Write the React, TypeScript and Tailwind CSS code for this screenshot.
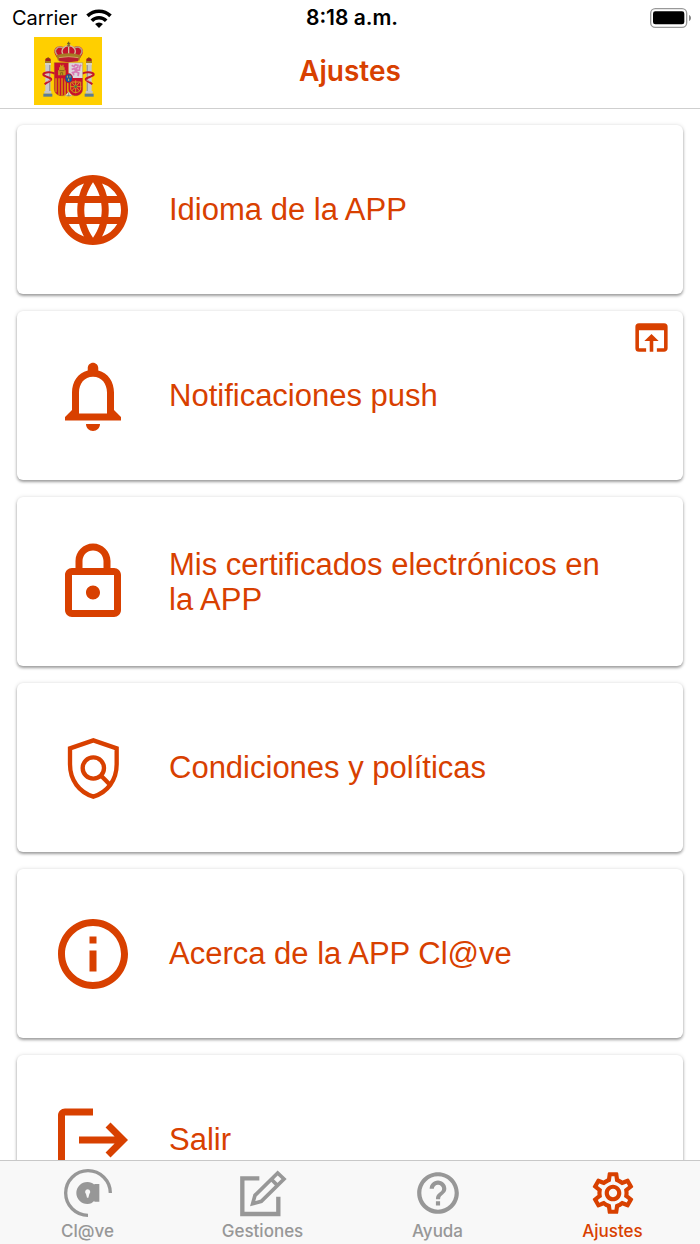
import type { ReactNode } from 'react'
import {
  MdHelpOutline,
  MdLanguage,
  MdLogout,
  MdNotificationsNone,
  MdOpenInBrowser,
  MdOutlineInfo,
  MdOutlineLock,
  MdOutlineSettings,
} from 'react-icons/md'

interface Setting {
  label: string
  icon: ReactNode
  external?: boolean
}

interface Tab {
  label: string
  href: string
  icon: ReactNode
  active?: boolean
}

const SETTINGS: Setting[] = [
  { label: 'Idioma de la APP', icon: <MdLanguage className="size-[84px]" /> },
  { label: 'Notificaciones push', icon: <MdNotificationsNone className="size-[84px]" />, external: true },
  { label: 'Mis certificados electrónicos en la APP', icon: <MdOutlineLock className="size-[84px]" /> },
  { label: 'Condiciones y políticas', icon: <PolicyIcon /> },
  { label: 'Acerca de la APP Cl@ve', icon: <MdOutlineInfo className="size-[84px]" /> },
  { label: 'Salir', icon: <MdLogout className="size-[84px]" /> },
]

const TABS: Tab[] = [
  { label: 'Cl@ve', href: '#clave', icon: <ClaveIcon /> },
  { label: 'Gestiones', href: '#gestiones', icon: <EditIcon /> },
  { label: 'Ayuda', href: '#ayuda', icon: <MdHelpOutline className="size-[50px]" /> },
  { label: 'Ajustes', href: '#ajustes', icon: <MdOutlineSettings className="size-[50px]" />, active: true },
]

function PolicyIcon() {
  return (
    <svg viewBox="0 0 252 252" className="size-[84px]" fill="none" stroke="currentColor" strokeWidth="13" aria-hidden="true">
      <path d="M127 43L57 67v48c0 48 28 84 70 97 42-13 70-49 70-97V67z" />
      <circle cx="127" cy="126" r="32" />
      <path d="M149 148l28 28" />
    </svg>
  )
}

function ClaveIcon() {
  return (
    <svg viewBox="0 0 150 150" className="size-[50px]" aria-hidden="true">
      <path d="M75 142A67 67 0 1 1 142 75" fill="none" stroke="currentColor" strokeWidth="10" />
      <path d="M73 42c9 0 16 3 21 8v-2h15v53H94v-3c-5 6-12 10-21 10a33 33 0 1 1 0-66z" fill="currentColor" />
      <path d="M74 64a8 8 0 0 0-5 14l3 11h4l3-11a8 8 0 0 0-5-14z" fill="#f7f7f7" />
    </svg>
  )
}

function EditIcon() {
  return (
    <svg viewBox="0 0 150 150" className="size-[50px]" fill="none" stroke="currentColor" aria-hidden="true">
      <path d="M64 31H13v107h108V86" strokeWidth="13" />
      <path d="M44 107l7-25 68-67 19 18-68 67z" strokeWidth="11" />
      <path d="M99 33l20 20" strokeWidth="11" />
    </svg>
  )
}

function WifiIcon() {
  return (
    <svg viewBox="0 0 78 58" className="h-[19px] w-[26px]" fill="none" stroke="currentColor" strokeWidth="11" aria-label="Wi-Fi">
      <path d="M4 21a50 50 0 0 1 70 0" />
      <path d="M17 36a31 31 0 0 1 44 0" />
      <path d="M39 58L27 46a17 17 0 0 1 24 0z" fill="currentColor" stroke="none" />
    </svg>
  )
}

function BatteryIcon() {
  return (
    <svg viewBox="0 0 126 60" className="h-5 w-[42px]" aria-label="Batería">
      <rect x="2" y="2" width="108" height="56" rx="14" fill="none" stroke="#999" strokeWidth="4" />
      <rect x="9" y="10" width="94" height="39" rx="7" />
      <path d="M117 21c8 3 8 15 0 18z" fill="#888" />
    </svg>
  )
}

function Pillar() {
  return (
    <g>
      <path d="M33 78h18v6H33z" fill="#d8d3c0" />
      <path d="M34 84h15v80H34z" fill="#c9c9cc" />
      <path d="M45 84h4v80h-4z" fill="#9a9a9e" />
      <path d="M31 162h21v8H31z" fill="#c4c4c4" />
      <path d="M28 170h27v9H28z" fill="#5c7d93" />
      <path d="M33 71h18v7H33z" fill="#a77a1c" />
      <path d="M34 66q8-7 16 0v6H34z" fill="#a3211f" />
      <path d="M41 61h3v6h-3z" fill="#7a5a10" />
      <path d="M62 110c-10-7-30-5-34 1-3 8 23 9 24 16 0 5-12 6-20 15" fill="none" stroke="#c3152c" strokeWidth="6" />
      <path d="M33 112l12 4M38 134l12-5" stroke="#e9b7a0" strokeWidth="2" />
    </g>
  )
}

function CoatOfArms() {
  return (
    <svg viewBox="0 0 204 204" className="size-[68px]" role="img" aria-label="Gobierno de España">
      <path d="M0 0h204v204H0z" fill="#ffcf00" />
      <Pillar />
      <g transform="matrix(-1 0 0 1 207 0)">
        <Pillar />
      </g>
      {/* crown */}
      <path d="M63 52c-8-22 12-29 25-22 8-5 24-5 32 0 13-7 33 0 25 22l-6 10H69z" fill="#c4152c" />
      <path d="M70 55c-15-19 3-29 17-22M138 55c15-19-3-29-17-22M88 54c-10-15 1-27 16-28 15 1 26 13 16 28M104 25v29" fill="none" stroke="#d3c09a" strokeWidth="4" />
      <path d="M70 55c-15-19 3-29 17-22M138 55c15-19-3-29-17-22" fill="none" stroke="#6e6250" strokeWidth="1" />
      <path d="M104 14v12M99 19h10" stroke="#64582d" strokeWidth="3" />
      <circle cx="104" cy="25" r="4" fill="#817137" />
      <path d="M67 55q37-12 74 0l-5 16q-32-8-64 0z" fill="#a67c24" />
      <path d="M74 63q30-7 60 0l-2 10q-28 5-56 0z" fill="#b81e30" />
      <path d="M75 62q29-6 58 0" fill="none" stroke="#e1c47a" strokeWidth="2" />
      {/* quarters */}
      <path d="M61 77h43v46H61z" fill="#c8102e" />
      <path d="M104 77h42v46h-42z" fill="#dcd8dc" />
      <path d="M61 123h43v33c0 27-43 27-43 0z" fill="#c8102e" />
      <path d="M104 123h42v33c0 27-42 27-42 0z" fill="#c8102e" />
      <path d="M66 124v42M75 124v50M84 124v52M93 124v50M101 124v40" stroke="#dba400" strokeWidth="4" />
      <path d="M72 115v-15h3v-9h3v-8h4v4h3v-4h4v8h3v9h3v15z" fill="#c9961c" />
      <path d="M80 115v-8h6v8M76 101h15" fill="none" stroke="#684b18" strokeWidth="2" />
      <path d="M113 85l7 4 4-6 8 2-1 6-6 3 5 6 9-1M113 97l8-2 5 8-8 4 1 8M126 104l8 4-2 9M136 99l2-12 4-3M113 108l6-3" fill="none" stroke="#d779b5" strokeWidth="5" />
      <path d="M125 130v39M109 149h33M113 136l24 26M137 136l-24 26M110 135h30v21c-2 14-28 14-30 0z" fill="none" stroke="#d49b17" strokeWidth="3" />
      <circle cx="125" cy="149" r="4" fill="#477b48" />
      <ellipse cx="104" cy="124" rx="13" ry="15" fill="#c8102e" />
      <ellipse cx="104" cy="124" rx="10" ry="12" fill="#17569b" />
      <path d="M100 116v6M108 116v6M104 125v7" stroke="#d3b844" strokeWidth="3" />
      <path d="M93 178l11-14 11 14z" fill="#e2dfdb" />
      <path d="M104 166v11M98 175h12" stroke="#68825d" strokeWidth="2" />
      <path d="M61 77h85v79c0 17-15 22-28 20q-10-1-14 3-4-4-14-3c-14 2-29-3-29-20z" fill="none" stroke="#8c632b" strokeWidth="1" />
    </svg>
  )
}

function SettingCard({ label, icon, external }: Setting) {
  return (
    <li>
      <button
        type="button"
        className="relative flex min-h-[169px] w-full items-center gap-[34px] rounded-md bg-white pr-16 pl-[34px] text-left shadow-[0_2px_3px_rgba(0,0,0,0.35),0_0_4px_rgba(0,0,0,0.12)]"
      >
        <span className="shrink-0">{icon}</span>
        <span className="text-[31px] leading-[35px]">{label}</span>
        {external && <MdOpenInBrowser className="absolute top-[5px] right-[10px] size-[43px]" />}
      </button>
    </li>
  )
}

export default function App() {
  return (
    <div className="flex h-screen flex-col bg-white font-['Liberation_Sans',Arial,sans-serif] text-[#d84000]">
      <header className="shrink-0 border-b border-[#cfcfcf] font-[Inter,sans-serif]">
        <div className="grid h-9 grid-cols-[1fr_auto_1fr] items-center pr-2 pl-3 text-xl text-black">
          <div className="flex items-center gap-2">
            <span>Carrier</span>
            <WifiIcon />
          </div>
          <time className="text-[21px] font-semibold">8:18 a.m.</time>
          <div className="flex justify-end">
            <BatteryIcon />
          </div>
        </div>
        <div className="grid h-[72px] grid-cols-[1fr_auto_1fr] items-center px-[34px] pb-0.5">
          <CoatOfArms />
          <h1 className="text-[28px] font-semibold">Ajustes</h1>
        </div>
      </header>

      <main className="min-h-0 flex-1 overflow-y-auto px-[17px] py-4 [scrollbar-width:none]">
        <ul className="flex flex-col gap-[17px]">
          {SETTINGS.map((setting) => (
            <SettingCard key={setting.label} {...setting} />
          ))}
        </ul>
      </main>

      <nav className="grid h-[84px] shrink-0 grid-cols-4 border-t border-[#c8c8c8] bg-[#f8f8f8] font-[Inter,sans-serif]">
        {TABS.map((tab) => (
          <a
            key={tab.label}
            href={tab.href}
            aria-current={tab.active ? 'page' : undefined}
            className={`flex flex-col items-center pt-[7px] text-[17px] leading-[26px] font-medium ${tab.active ? 'text-[#d84000]' : 'text-[#979797]'}`}
          >
            {tab.icon}
            <span>{tab.label}</span>
          </a>
        ))}
      </nav>
    </div>
  )
}
